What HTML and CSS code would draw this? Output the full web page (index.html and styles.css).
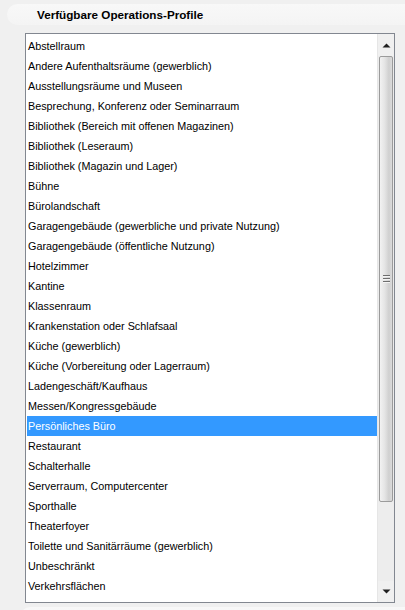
FILE: index.html
```html
<!DOCTYPE html>
<html lang="de">
<head>
<meta charset="utf-8">
<title>Verfügbare Operations-Profile</title>
<link rel="stylesheet" href="styles.css">
</head>
<body>
<div class="section-head"><span class="section-title">Verfügbare Operations-Profile</span></div>
<div class="listbox">
  <ul class="items">
    <li>Abstellraum</li>
    <li>Andere Aufenthaltsräume (gewerblich)</li>
    <li>Ausstellungsräume und Museen</li>
    <li>Besprechung, Konferenz oder Seminarraum</li>
    <li>Bibliothek (Bereich mit offenen Magazinen)</li>
    <li>Bibliothek (Leseraum)</li>
    <li>Bibliothek (Magazin und Lager)</li>
    <li>Bühne</li>
    <li>Bürolandschaft</li>
    <li>Garagengebäude (gewerbliche und private Nutzung)</li>
    <li>Garagengebäude (öffentliche Nutzung)</li>
    <li>Hotelzimmer</li>
    <li>Kantine</li>
    <li>Klassenraum</li>
    <li>Krankenstation oder Schlafsaal</li>
    <li>Küche (gewerblich)</li>
    <li>Küche (Vorbereitung oder Lagerraum)</li>
    <li>Ladengeschäft/Kaufhaus</li>
    <li>Messen/Kongressgebäude</li>
    <li class="selected">Persönliches Büro</li>
    <li>Restaurant</li>
    <li>Schalterhalle</li>
    <li>Serverraum, Computercenter</li>
    <li>Sporthalle</li>
    <li>Theaterfoyer</li>
    <li>Toilette und Sanitärräume (gewerblich)</li>
    <li>Unbeschränkt</li>
    <li>Verkehrsflächen</li>
  </ul>
  <div class="scrollbar">
    <div class="sb-btn"><svg width="9" height="5" viewBox="0 0 9 5"><path d="M0.5 4.5 L4.5 0.5 L8.5 4.5 Z" fill="#202020"/></svg></div>
    <div class="sb-thumb">
      <div class="grip"><span></span><span></span><span></span></div>
    </div>
    <div class="sb-track"></div>
    <div class="sb-btn sb-btn-down"><svg width="9" height="5" viewBox="0 0 9 5"><path d="M0.5 0.5 L8.5 0.5 L4.5 4.5 Z" fill="#202020"/></svg></div>
  </div>
</div>
<div class="section-head next"></div>
</body>
</html>
```
FILE: styles.css
```css
html, body {
  margin: 0;
  padding: 0;
}
body {
  background: #f0f0f0;
  font-family: "Liberation Sans", Arial, sans-serif;
  width: 405px;
  height: 610px;
  overflow: hidden;
}
.section-head {
  margin: 4px 0 0 7px;
  height: 21px;
  border-radius: 11px 0 0 11px;
  background: linear-gradient(#f8f8f8, #f4f4f4);
  display: flex;
  align-items: center;
}
.section-title {
  padding-left: 30px;
  font-weight: bold;
  font-size: 11.7px;
  color: #000;
}
.section-head.next {
  margin: 4px 0 0 20px;
  height: 21px;
}
.listbox {
  margin: 8px 0 0 25px;
  width: 370px;
  height: 570px;
  box-sizing: border-box;
  border: 1px solid #828790;
  background: #fff;
  display: flex;
}
.items {
  list-style: none;
  margin: 0;
  padding: 2px 0 0 1px;
  flex: 1;
  overflow: hidden;
}
.items li {
  height: 20px;
  line-height: 20px;
  padding-left: 1px;
  font-size: 10.8px;
  color: #000;
  white-space: nowrap;
}
.items li.selected {
  background: #3399ff;
  color: #fff;
}
.scrollbar {
  width: 17px;
  display: flex;
  flex-direction: column;
  background: #ececec;
  border-left: 1px solid #e6e6e6;
  box-sizing: border-box;
}
.sb-btn {
  height: 22px;
  flex: none;
  display: flex;
  align-items: center;
  justify-content: center;
  background: #f0f0f0;
}
.sb-btn-down {
  height: 21px;
}
.sb-thumb {
  height: 446px;
  flex: none;
  margin: 0 1px;
  box-sizing: border-box;
  border: 1px solid #9b9b9b;
  border-radius: 2px;
  background: linear-gradient(to right, #f2f2f2 0%, #e4e4e4 40%, #cfcfcf 75%, #dcdcdc 100%);
  display: flex;
  align-items: center;
  justify-content: center;
}
.grip {
  display: flex;
  flex-direction: column;
  gap: 1px;
  margin-top: 0;
}
.grip span {
  display: block;
  width: 7px;
  height: 2px;
  background: linear-gradient(#6e6e6e 50%, #f4f4f4 50%);
}
.sb-track {
  flex: 1;
  background: #ededed;
}
```
